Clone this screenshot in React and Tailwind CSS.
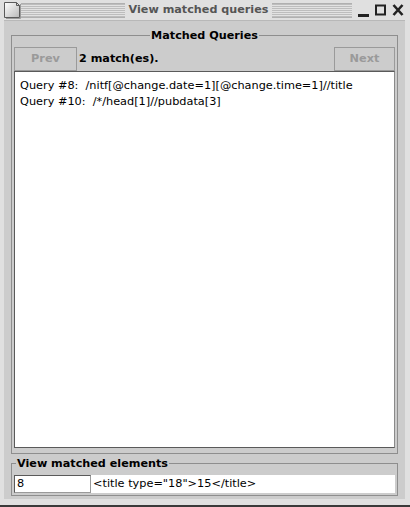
import React from "react";

const stripes =
  "bg-[repeating-linear-gradient(to_bottom,#bdbdbd_0px,#bdbdbd_1px,#e2e2e2_1px,#e2e2e2_2px)]";

function Stripes({ className }) {
  return <div className={`${className} h-[15px] border-y border-[#b0b0b0] ${stripes}`} />;
}

export default function App() {
  return (
    <div className="w-[410px] h-[507px] bg-[#e0e0e0] flex flex-col border-b-2 border-[#3a3a3a] font-['DejaVu_Sans',sans-serif] text-[11.3px] overflow-hidden">
      {/* Title bar */}
      <div className="h-[20px] flex items-center pl-[4px] pr-[4px] shrink-0">
        <svg width="17" height="17" viewBox="0 0 17 17" className="shrink-0">
          <defs>
            <linearGradient id="g" x1="0" y1="0" x2="1" y2="1">
              <stop offset="0" stopColor="#ffffff" />
              <stop offset="1" stopColor="#b8b8b8" />
            </linearGradient>
          </defs>
          <path d="M0.5 0.5 H12.5 L15.5 3.5 V15.5 H0.5 Z" fill="url(#g)" stroke="#5a5a5a" />
          <path d="M12.5 0.5 V3.5 H15.5" fill="none" stroke="#5a5a5a" />
          <path d="M2 16.5 H16.5 V2" fill="none" stroke="#9a9a9a" />
        </svg>
        <div className="flex items-center ml-[0px] w-[331px]">
          <Stripes className="w-[104px]" />
          <div className="flex-1 text-center font-bold text-[11.2px] text-[#555555] leading-[16px]">View matched queries</div>
          <Stripes className="w-[80px]" />
        </div>
        <div className="flex items-center ml-[6px] gap-[6px]">
          <svg width="11" height="14" viewBox="0 0 11 14">
            <rect x="0" y="11" width="11" height="3" fill="#222" />
          </svg>
          <svg width="11" height="14" viewBox="0 0 11 14">
            <rect x="1" y="2.5" width="9" height="9" fill="none" stroke="#222" strokeWidth="2" />
          </svg>
          <svg width="12" height="14" viewBox="0 0 12 14">
            <path d="M1.5 2 L10.5 12 M10.5 2 L1.5 12" stroke="#222" strokeWidth="2.6" />
          </svg>
        </div>
      </div>

      {/* Content */}
      <div className="flex-1 ml-[4px] mr-[5px] mb-[6px] bg-[#cccccc] flex flex-col pt-[7px] pb-[3px] px-[7px] border-t border-[#b8b8b8]">
        <fieldset className="flex-1 flex flex-col border border-[#8e8e8e] px-[2px] pt-[4px] pb-[5px] min-h-0">
          <legend className="mx-auto px-[1px] font-bold text-[11.2px] leading-[15px] text-black">Matched Queries</legend>
          <div className="flex items-center h-[24px]">
            <div className="w-[63px] h-[24px] border border-[#9a9a9a] flex items-center justify-center font-bold text-[#9a9a9a]">Prev</div>
            <div className="ml-[2px] font-bold text-[11.2px] text-black flex-1">2 match(es).</div>
            <div className="w-[61px] h-[24px] border border-[#9a9a9a] flex items-center justify-center font-bold text-[#9a9a9a]">Next</div>
          </div>
          <div className="flex-1 bg-white border border-[#5a5a5a] border-r-[#8a8a8a] pl-[5px] pt-[6px] text-black leading-[16px]">
            <div>Query #8:&nbsp; /nitf[@change.date=1][@change.time=1]//title</div>
            <div>Query #10:&nbsp; /*/head[1]//pubdata[3]</div>
          </div>
        </fieldset>
        <fieldset className="mt-[2px] border border-[#8e8e8e] px-[2px] pt-[4px] pb-[2px]">
          <legend className="ml-[2px] px-[1px] font-bold text-[11.2px] leading-[15px] text-black">View matched elements</legend>
          <div className="flex h-[18px] bg-white">
            <div className="w-[77px] h-[18px] border border-[#5a5a5a] border-r-[#9a9a9a] border-b-[#9a9a9a] pl-[2px] leading-[16px] text-black">8</div>
            <div className="pl-[2px] leading-[18px] text-black">&lt;title type="18"&gt;15&lt;/title&gt;</div>
          </div>
        </fieldset>
      </div>
    </div>
  );
}
